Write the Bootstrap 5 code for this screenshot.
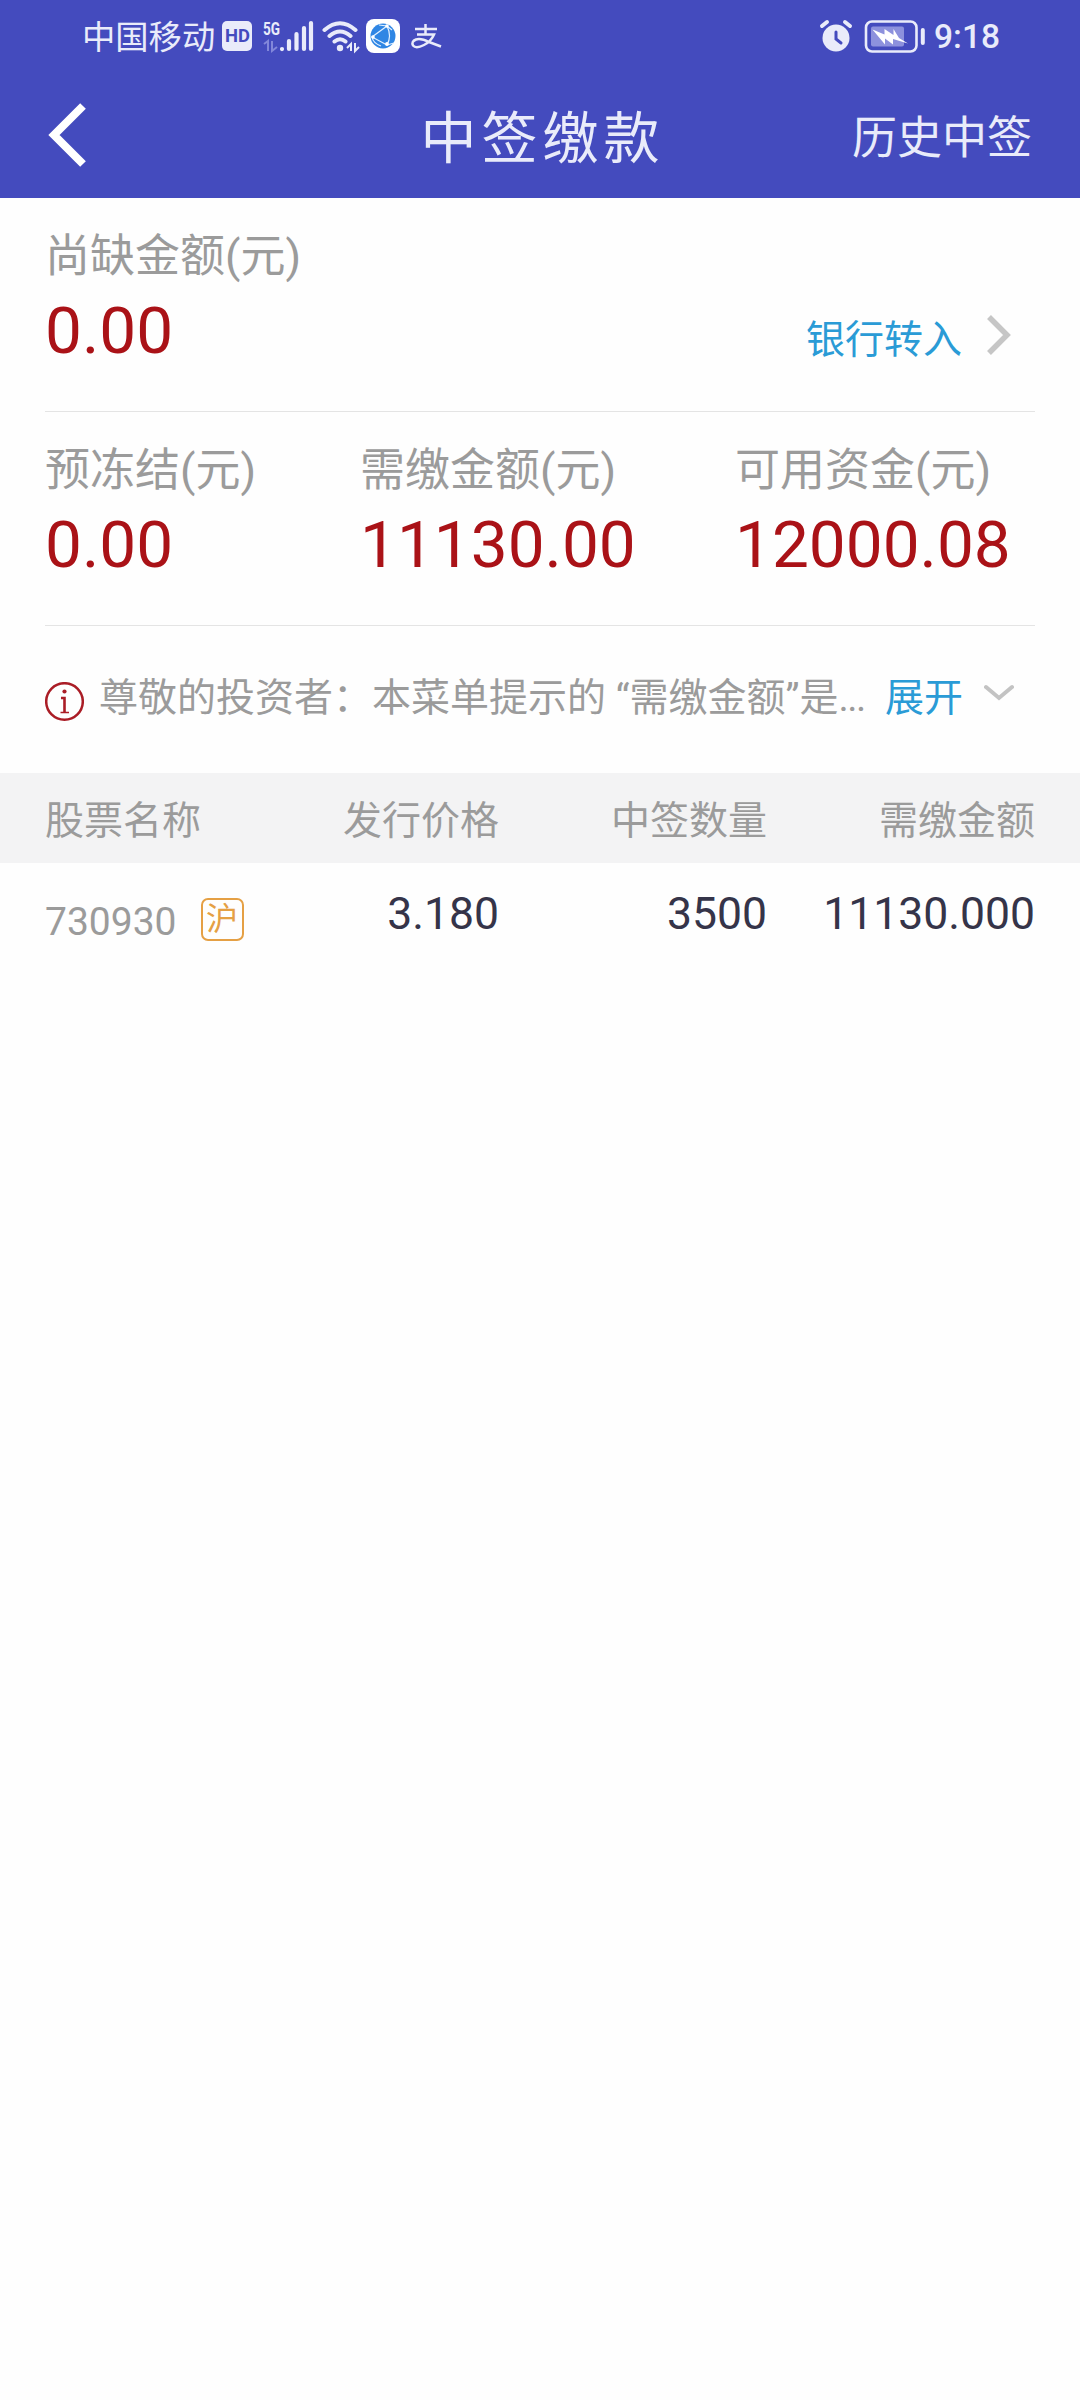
<!DOCTYPE html>
<html lang="zh-CN">
<head>
<meta charset="utf-8">
<meta name="viewport" content="width=device-width, initial-scale=1">
<title>中签缴款</title>
<link rel="stylesheet" href="https://cdn.jsdelivr.net/npm/bootstrap@5.3.0/dist/css/bootstrap.min.css">
<style>
body{font-family:Roboto,"Noto Sans CJK SC",sans-serif;background:#fefefe;color:#353449;min-height:2400px}
.app-top{background:#444bbe;color:#e9ebfa;height:198px}
.status-bar{height:74px;padding:0 80px 0 82px}
.carrier{font-size:33.300px;line-height:40px;width:132px;margin-top:2px;white-space:nowrap}
.clock{font-size:33.500px;line-height:40px}
.title-bar{height:124px;padding:0 48px}
.title-side{flex:1 1 0}
.page-title{font-size:56px;line-height:70px;letter-spacing:5px;margin-right:-5px;margin-top:6px;font-weight:400}
.history-link{font-size:45px;line-height:60px;color:inherit;margin-top:5px}
.page-gutter{margin:0 45px}
.amount-block{height:214px;padding-top:29px;border-bottom:1px solid #e4e4e4}
.amount-label{font-size:45px;line-height:60px;color:#9b9b9b;white-space:nowrap}
.amount-value{font-size:65.700px;line-height:60px;margin-top:14px;color:#aa1217;white-space:nowrap}
.amount-c1{width:315px}.amount-c2{width:375px}
.action-link{font-size:39px;line-height:50px;color:#2a9bd6;white-space:nowrap}
.transfer-link{margin-top:88px;margin-right:23px;gap:24px}
.notice-line{height:147px;padding-bottom:4px}
.notice-text{font-size:39px;line-height:50px;color:#9b9b9b;margin-left:15px;white-space:nowrap}
.notice-dots{letter-spacing:-1.500px}
.expand-icon{margin:0 21px 10px 21px}
.stock-grid{display:grid;grid-template-columns:200px 254px 268px 268px;padding:0 45px}
.stock-head{background:#f3f3f4;color:#9b9b9b;font-size:39px;line-height:50px;height:90px;padding-top:5px}
.stock-row{font-size:44.500px;line-height:60px;padding-top:21px}
.stock-code{font-size:39px;line-height:50px;color:#9b9b9b;margin-top:13px}
.market-tag{width:43px;height:43px;border:2px solid #e5a044;border-radius:7px;color:#e5a044;font-size:32px;line-height:38px;margin-left:24px;margin-top:-6px}
svg{display:block;flex:none}
</style>
</head>
<body>
<header class="app-top">
  <div class="status-bar d-flex align-items-center justify-content-between">
    <div class="d-flex align-items-center">
      <span class="carrier">中国移动</span>
      <svg width="230" height="40" viewBox="214 17 230 40" fill="none" stroke="#e9ebfa">
        <rect x="222" y="21" width="30" height="30" rx="5" fill="#e9ebfa" stroke="none"/>
        <text x="225" y="42" font-family="Roboto" font-weight="700" font-size="18" textLength="25" lengthAdjust="spacingAndGlyphs" fill="#444bbe" stroke="none">HD</text>
        <text x="263" y="35" font-family="Roboto" font-weight="700" font-size="19" textLength="17" lengthAdjust="spacingAndGlyphs" fill="#e9ebfa" stroke="none">5G</text>
        <path d="M264 44l4-3v10M272 41v10l5-4" stroke="#8287da" stroke-width="2"/>
        <path d="M282 49v.1M289 41v8M296.500 34v15M304 28v21M311 23v26" stroke-width="4.200" stroke-linecap="round"/>
        <path d="M324.500 30q15.500-13.500 31 0M329.500 36q10.500-9 21 0M334.500 41.500q5.500-4.500 11 0" stroke-width="4" stroke-linecap="round"/>
        <circle cx="340" cy="48" r="3.200" fill="#e9ebfa" stroke="none"/>
        <path d="M347 48l4-4v7M355 43v8l4-4" stroke-width="2"/>
        <rect x="366" y="19" width="34" height="34" rx="8" fill="#fff" stroke="none"/>
        <circle cx="383" cy="36" r="12.500" fill="#2f86e4" stroke="none"/>
        <path d="M387 26L372 37l15 8M387 26q5 10 0 19M372 37q1 6 9 9M379 25l8 1 5 4M387 45l7-2" stroke="#e3f1ff" stroke-width="1.200"/>
        <circle cx="387" cy="26" r="1.800" fill="#fff" stroke="none"/><circle cx="373" cy="37" r="1.800" fill="#fff" stroke="none"/><circle cx="387" cy="44" r="1.900" fill="#fff" stroke="none"/>
        <path d="M415 29h22M425.500 24v10M417 34.500h17q-3 7-10 10.500-8 4-11 .5-2-4 3-6 5-1.500 13 2.500l12 4.500" stroke-width="2.500"/>
      </svg>
    </div>
    <div class="d-flex align-items-center">
      <svg width="116" height="40" viewBox="818 17 116 40" fill="none" stroke="#e9ebfa">
        <circle cx="836" cy="38" r="13.500" fill="#e9ebfa" stroke="none"/>
        <path d="M822 26l5-4M850 26l-5-4" stroke-width="4" stroke-linecap="round"/>
        <path d="M836 32v7l5 4" stroke="#444bbe" stroke-width="3" stroke-linecap="round"/>
        <rect x="866" y="21.500" width="50.500" height="30" rx="6" stroke-width="2.600"/>
        <rect x="871" y="26.500" width="33" height="20" rx="2" fill="#8d91dd" stroke="none"/>
        <path d="M872.500 29.500l12 5 0-5.500 9 6 0-6L899 38l9 5.500-15-4.500 0 5.500-8-6 0 6z" fill="#fff" stroke="none"/>
        <path d="M922.800 30v13" stroke-width="4" stroke-linecap="round"/>
      </svg>
      <span class="clock fw-medium">9:18</span>
    </div>
  </div>
  <nav class="title-bar d-flex align-items-center">
    <div class="title-side">
      <svg width="40" height="66" viewBox="0 0 40 66" fill="none" stroke="#fff" stroke-width="8"><path d="M35 3L6 32 35 61"/></svg>
    </div>
    <h1 class="page-title mb-0">中签缴款</h1>
    <div class="title-side text-end"><a class="history-link d-inline-block text-decoration-none" href="#">历史中签</a></div>
  </nav>
</header>
<main>
  <section class="page-gutter amount-block d-flex justify-content-between">
    <div>
      <div class="amount-label">尚缺金额(元)</div>
      <div class="amount-value">0.00</div>
    </div>
    <a class="action-link transfer-link d-flex align-items-start text-decoration-none" href="#">银行转入
      <svg width="26" height="40" viewBox="0 0 26 40" fill="none" stroke="#c6c6c6" stroke-width="5.500"><path d="M3 2l18 18L3 38"/></svg>
    </a>
  </section>
  <section class="page-gutter amount-block d-flex">
    <div class="amount-c1"><div class="amount-label">预冻结(元)</div><div class="amount-value">0.00</div></div>
    <div class="amount-c2"><div class="amount-label">需缴金额(元)</div><div class="amount-value">11130.00</div></div>
    <div><div class="amount-label">可用资金(元)</div><div class="amount-value">12000.08</div></div>
  </section>
  <section class="page-gutter notice-line d-flex align-items-center">
    <svg class="mt-2" width="39" height="40" viewBox="0 0 39 40" fill="none" stroke="#aa1d26"><circle cx="19.500" cy="19.500" r="18.300" stroke-width="2.500"/><circle cx="19.500" cy="9.500" r="2.100" fill="#aa1d26" stroke="none"/><path d="M16 16h3.500v14.500" stroke-width="2.600"/><path d="M15.500 30.500h8.500" stroke-width="1.500"/></svg>
    <span class="notice-text">尊敬的投资者：本菜单提示的 “需缴金额”是<span class="notice-dots">...</span></span>
    <a class="action-link text-decoration-none ms-auto" href="#">展开</a>
    <svg class="expand-icon" width="30" height="18" viewBox="0 0 30 18" fill="none" stroke="#c3c3c3" stroke-width="4" stroke-linecap="round"><path d="M2 3l13 11L28 3"/></svg>
  </section>
  <section>
    <div class="stock-grid stock-head align-items-center text-end">
      <span class="text-start">股票名称</span><span>发行价格</span><span>中签数量</span><span>需缴金额</span>
    </div>
    <div class="stock-grid stock-row text-end">
      <div class="stock-code d-flex align-items-center text-start">730930<span class="market-tag text-center flex-shrink-0">沪</span></div>
      <span>3.180</span><span>3500</span><span>11130.000</span>
    </div>
  </section>
</main>
<script src="https://cdn.jsdelivr.net/npm/bootstrap@5.3.0/dist/js/bootstrap.bundle.min.js"></script>
</body>
</html>
